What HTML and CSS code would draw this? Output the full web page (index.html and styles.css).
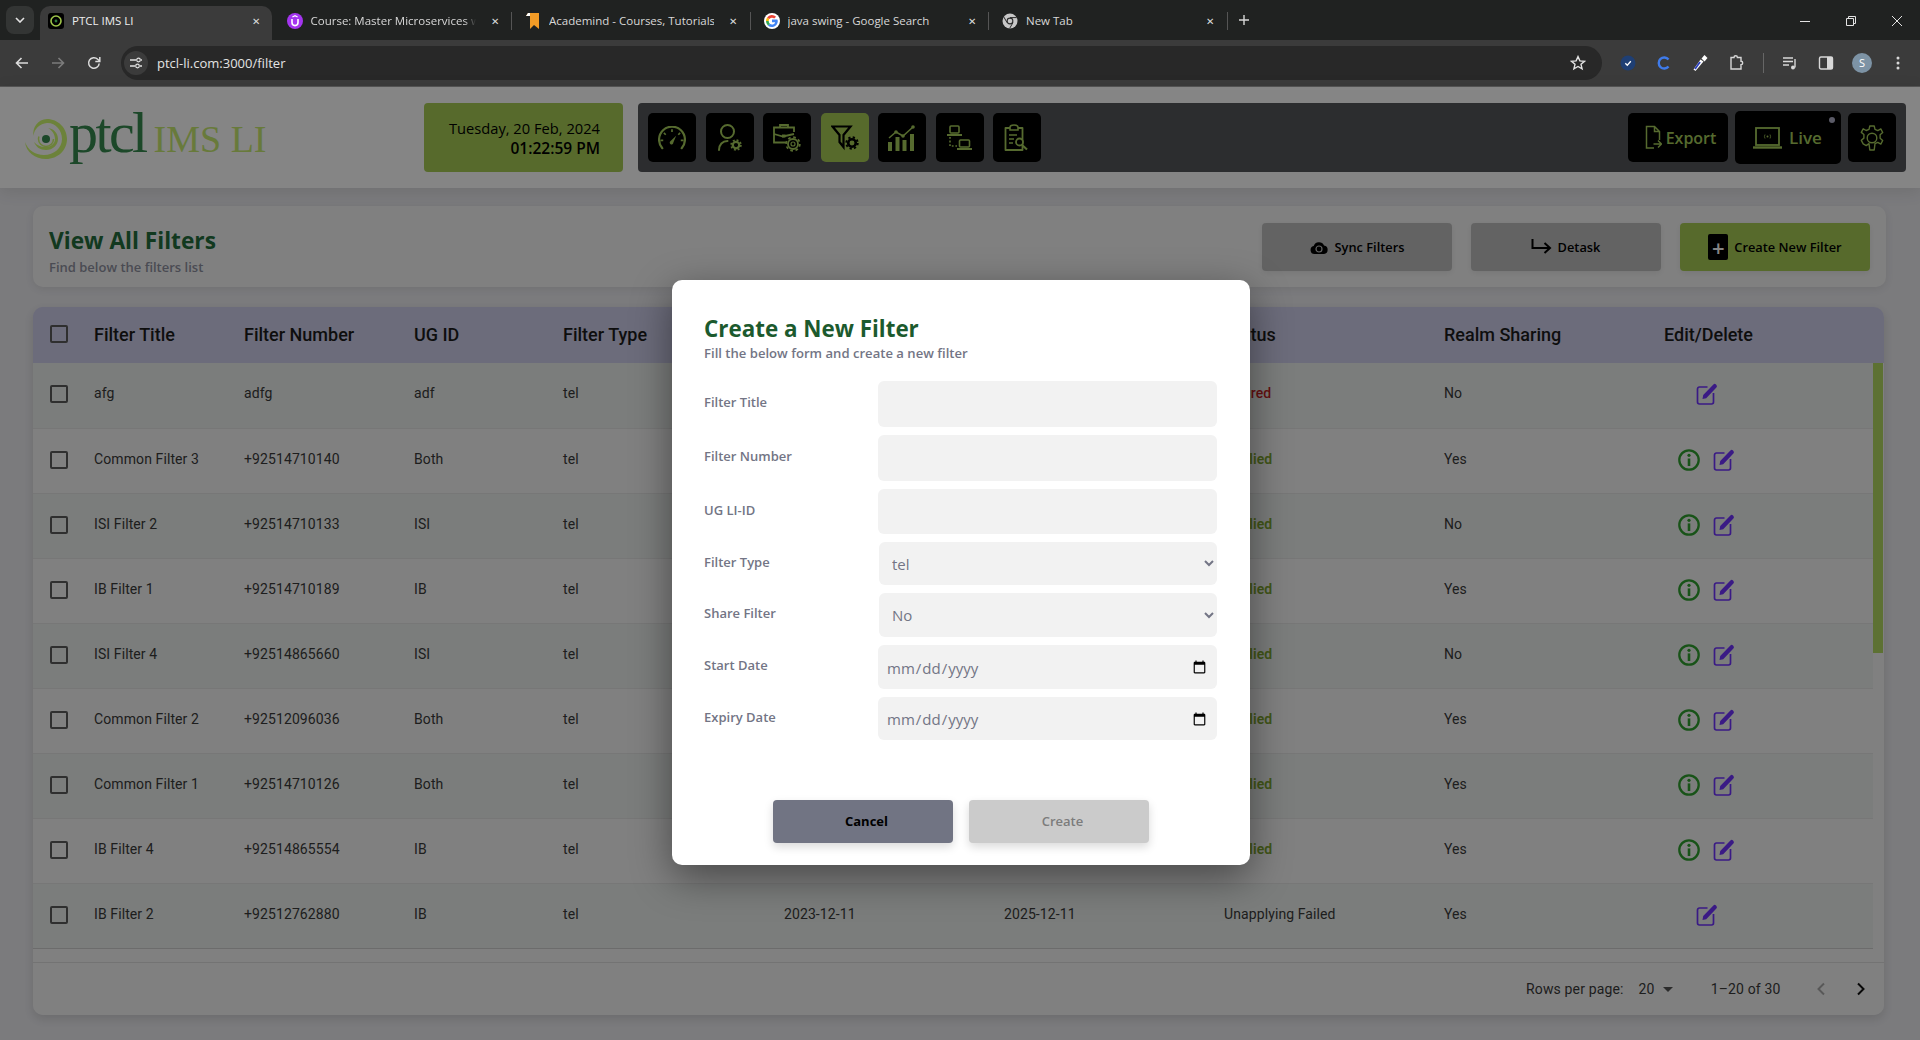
FILE: index.html
```html
<!DOCTYPE html>
<html lang="en">
<head>
    <meta charset="UTF-8">
    <title>PTCL IMS LI</title>
    <link rel="stylesheet" href="styles.css">
</head>
<body>

<svg class="defs" width="0" height="0">
    <symbol id="gear" viewBox="0 0 24 24">
        <circle cx="12" cy="12" r="6.5" fill="none" stroke="currentColor" stroke-width="4.5"/>
        <circle cx="12" cy="12" r="9.8" fill="none" stroke="currentColor" stroke-width="3.4" stroke-dasharray="3.85 3.85"/>
    </symbol>
    <symbol id="edit" viewBox="0 0 22 22">
        <path d="M11.500 4H3.400A1.900 1.900 0 0 0 1.500 5.900v13.200A1.900 1.900 0 0 0 3.400 21h12.200a1.900 1.900 0 0 0 1.900-1.900V10" fill="none" stroke="currentColor" stroke-width="1.700"/>
        <path d="M6.500 16l.7-4L17.400 1.500a1.800 1.800 0 0 1 2.600 0l.4.4a1.800 1.800 0 0 1 0 2.500L10.200 15.200z" fill="currentColor"/>
    </symbol>
    <symbol id="info" viewBox="0 0 22 22">
        <circle cx="11" cy="11" r="9.700" fill="none" stroke="currentColor" stroke-width="2.300"/>
        <circle cx="11" cy="6.300" r="1.600" fill="currentColor"/>
        <path d="M11 9.400v7.600" stroke="currentColor" stroke-width="2.600"/>
    </symbol>
</svg>

<!-- browser chrome -->
<div class="tabstrip">
    <div class="tab-search"><svg width="10" height="6" viewBox="0 0 10 6"><path d="M1 1l4 4 4-4" fill="none" stroke="#e3e3e3" stroke-width="1.600"/></svg></div>
    <div class="tab tab-active">
        <svg class="fav" viewBox="0 0 16 16"><rect width="16" height="16" rx="3" fill="#000"/><circle cx="8" cy="8" r="5" fill="none" stroke="#9fc54a" stroke-width="1.600"/><circle cx="8" cy="8" r="1.400" fill="#2e7d3a"/></svg>
        <span class="tab-title">PTCL IMS LI</span>
        <span class="tab-close">&#10005;</span>
    </div>
    <div class="tab">
        <svg class="fav" viewBox="0 0 16 16"><circle cx="8" cy="8" r="8" fill="#a435f0"/><path d="M5 6v3.600a3 3 0 0 0 6 0V6" fill="none" stroke="#fff" stroke-width="1.600"/><path d="M5.400 4L8 2.600 10.600 4" fill="none" stroke="#fff" stroke-width="1.200"/></svg>
        <span class="tab-title tab-title-fade">Course: Master Microservices wi</span>
        <span class="tab-close">&#10005;</span><i class="tab-sep"></i>
    </div>
    <div class="tab">
        <svg class="fav" viewBox="0 0 16 16"><path d="M3 0h11v16l-5-4-4 4V3H1z" fill="#f39c26"/><path d="M1 3l2-3h2v3z" fill="#fff"/></svg>
        <span class="tab-title">Academind - Courses, Tutorials</span>
        <span class="tab-close">&#10005;</span><i class="tab-sep"></i>
    </div>
    <div class="tab">
        <svg class="fav" viewBox="0 0 16 16"><circle cx="8" cy="8" r="8" fill="#fff"/><path d="M13.400 6.600H8v2.700h3.200a3.300 3.300 0 0 1-5.300 1.500l-2 1.700a6 6 0 0 0 9.900-4.500z" fill="#4285f4"/><path d="M3.900 12.500l2-1.700A3.300 3.300 0 0 1 4.700 8H2a6 6 0 0 0 1.900 4.500z" fill="#34a853"/><path d="M2 8h2.700a3.300 3.300 0 0 1 .6-2L3.100 4.400A6 6 0 0 0 2 8z" fill="#fbbc05"/><path d="M5.300 6A3.300 3.300 0 0 1 10.200 5.500l1.900-1.800A6 6 0 0 0 3.100 4.400z" fill="#ea4335"/></svg>
        <span class="tab-title">java swing - Google Search</span>
        <span class="tab-close">&#10005;</span><i class="tab-sep"></i>
    </div>
    <div class="tab">
        <svg class="fav" viewBox="0 0 16 16"><circle cx="8" cy="8" r="7.500" fill="#c7c7c7"/><circle cx="8" cy="8" r="3.400" fill="#2a2b2b"/><circle cx="8" cy="8" r="2.300" fill="#c7c7c7"/><path d="M8 4.600h6.500M5.100 9.700L1.900 4.100M10.900 9.700l-3.200 5.600" stroke="#2a2b2b" stroke-width="1"/></svg>
        <span class="tab-title">New Tab</span>
        <span class="tab-close">&#10005;</span><i class="tab-sep"></i>
    </div>
    <svg class="tab-new" width="12" height="12" viewBox="0 0 12 12"><path d="M6 1v10M1 6h10" stroke="#d8d8d8" stroke-width="1.400"/></svg>
    <div class="win-buttons">
        <svg width="10" height="10" viewBox="0 0 10 10"><path d="M0 5.500h10" stroke="#e3e3e3"/></svg>
        <svg width="10" height="10" viewBox="0 0 10 10"><path d="M.5 2.500h7v7h-7zM2.500 2.500V.5h7v7h-2" fill="none" stroke="#e3e3e3"/></svg>
        <svg width="10" height="10" viewBox="0 0 10 10"><path d="M0 0l10 10M10 0L0 10" stroke="#e3e3e3"/></svg>
    </div>
</div>

<div class="toolbar">
    <svg class="tb-icon" viewBox="0 0 16 16"><path d="M14 8H3M7.500 3L2.500 8l5 5" fill="none" stroke="#dcdcdc" stroke-width="1.600"/></svg>
    <svg class="tb-icon" viewBox="0 0 16 16"><path d="M2 8h11M8.500 3l5 5-5 5" fill="none" stroke="#7c7c7c" stroke-width="1.600"/></svg>
    <svg class="tb-icon" viewBox="0 0 16 16"><path d="M13.200 8.500a5.300 5.300 0 1 1-1.500-4.200L13.500 6" fill="none" stroke="#dcdcdc" stroke-width="1.500"/><path d="M13.800 2v4.500H9.300" fill="none" stroke="#dcdcdc" stroke-width="1.500"/></svg>
    <div class="omnibox">
        <span class="site-info"><svg width="14" height="14" viewBox="0 0 14 14"><path d="M1 4h6M11 10h2M1 10h5M12 4h1" stroke="#e3e3e3" stroke-width="1.300"/><circle cx="9.500" cy="4" r="1.800" fill="none" stroke="#e3e3e3" stroke-width="1.200"/><circle cx="8.500" cy="10" r="1.800" fill="none" stroke="#e3e3e3" stroke-width="1.200"/></svg></span>
        <span class="url">ptcl-li.com:3000/filter</span>
        <svg class="star" width="16" height="16" viewBox="0 0 16 16"><path d="M8 1.600l1.900 4.300 4.600.4-3.500 3 1.100 4.600L8 11.500l-4.100 2.400L5 9.300l-3.500-3 4.600-.4z" fill="none" stroke="#e3e3e3" stroke-width="1.400"/></svg>
    </div>
    <div class="ext-icons">
        <svg viewBox="0 0 16 16"><circle cx="8" cy="8" r="7.500" fill="#1f3f74"/><path d="M5.300 8.200l2 2 3.500-4" fill="none" stroke="#fff" stroke-width="1.300"/></svg>
        <svg viewBox="0 0 16 16"><path d="M12.500 4.500A5.500 5.500 0 1 0 12.500 11.500" fill="none" stroke="#3f7bea" stroke-width="2.400"/></svg>
        <svg viewBox="0 0 16 16"><path d="M3.500 16L1.500 14.500 8.500 4.500l3 2z" fill="#fff"/><path d="M3 14l5-7" stroke="#2b3fbd" stroke-width="1.800"/><path d="M9.500 3.500L12.500 0l3 3-3 3.500z" fill="#fff"/></svg>
        <svg viewBox="0 0 16 16"><path d="M6 2.500a1.700 1.700 0 0 1 3.400 0h3.600v3.800a1.700 1.700 0 0 1 0 3.400V14H3V9.700V2.500z" fill="none" stroke="#d8d8d8" stroke-width="1.400"/></svg>
        <i class="ext-sep"></i>
        <svg viewBox="0 0 16 16"><path d="M1 3h10M1 6.500h10M1 10h6" stroke="#d8d8d8" stroke-width="1.400"/><path d="M13 4v8.500" stroke="#d8d8d8" stroke-width="1.400"/><circle cx="11" cy="12.500" r="2" fill="#d8d8d8"/></svg>
        <svg viewBox="0 0 16 16"><rect x="1.500" y="2" width="13" height="12" rx="1.500" fill="none" stroke="#d8d8d8" stroke-width="1.400"/><rect x="9" y="2" width="5.500" height="12" fill="#d8d8d8"/></svg>
        <span class="avatar">S</span>
        <svg viewBox="0 0 16 16"><circle cx="8" cy="3" r="1.500" fill="#d8d8d8"/><circle cx="8" cy="8" r="1.500" fill="#d8d8d8"/><circle cx="8" cy="13" r="1.500" fill="#d8d8d8"/></svg>
    </div>
</div>

<div class="page">
    <header class="app-header">
        <div class="logo">
            <svg class="logo-mark" width="42" height="40" viewBox="0 0 42 40">
                <path d="M22 0C33 0 42 9 42 20S33 40 21 40C10 40 1 33 0 23c3 8 10 13 19 13 10 0 18-7 18-16S30 3.500 22 4C15 4.500 9 10 8.500 17 7 9 13 0 22 0z" fill="#d0fa70"/>
                <path d="M23 9c6 .5 10 5.500 10 11 0 6-5 11-12 11-6 0-10-3-12-8 3 3.500 7 5 11 5 6 0 10-3.500 10-8S27 11 23 9z" fill="#d0fa70"/>
                <circle cx="21" cy="20" r="7.500" fill="none" stroke="#d0fa70" stroke-width="1.500" stroke-dasharray="26 22"/>
                <circle cx="21" cy="20" r="4" fill="#368a50"/>
            </svg>
            <span class="logo-ptcl">ptcl</span>
            <span class="logo-ims">IMS LI</span>
        </div>
        <div class="clock">
            <div>Tuesday, 20 Feb, 2024</div>
            <div class="clock-time">01:22:59 PM</div>
        </div>
        <nav class="main-nav">
            <a class="nav-btn"><svg width="28" height="24" viewBox="0 0 30 26"><path d="M4.500 24A14 14 0 1 1 25.500 24" fill="none" stroke="currentColor" stroke-width="2.400" stroke-linecap="round"/><path d="M15 3.500v3M6.200 7.500l2 2M23.800 7.500l-2 2M2.500 15.500h3M24.500 15.500h3" stroke="currentColor" stroke-width="1.800"/><path d="M19.500 10.500L16.500 18a2 2 0 1 1-3-1.800z" fill="currentColor"/></svg></a>
            <a class="nav-btn"><svg width="24" height="28" viewBox="0 0 24 28"><circle cx="9.500" cy="7.500" r="6.500" fill="none" stroke="currentColor" stroke-width="2"/><path d="M1 26c0-5.500 3.500-9 8.500-9" fill="none" stroke="currentColor" stroke-width="2" stroke-linecap="round"/><use href="#gear" x="12" y="15" width="12" height="12"/></svg></a>
            <a class="nav-btn"><svg width="28" height="28" viewBox="0 0 28 28"><path d="M21 8V3.500H1v15h12M1 10l9 2.500 11-2.500M7 3.500V1h8v2.500" fill="none" stroke="currentColor" stroke-width="1.800"/><rect x="9" y="10.500" width="3.500" height="3" fill="currentColor"/><circle cx="20" cy="20" r="5" fill="none" stroke="currentColor" stroke-width="1.800"/><circle cx="20" cy="20" r="2" fill="none" stroke="currentColor" stroke-width="1.200"/><circle cx="20" cy="20" r="6.800" fill="none" stroke="currentColor" stroke-width="1.800" stroke-dasharray="2.700 2.640"/></svg></a>
            <a class="nav-btn nav-active"><svg width="28" height="26" viewBox="0 0 28 26"><path d="M1.500 1.500h18L12.500 10v12L8.500 17v-7z" fill="none" stroke="currentColor" stroke-width="2.200"/><use href="#gear" x="14" y="11" width="14" height="14"/></svg></a>
            <a class="nav-btn"><svg width="28" height="26" viewBox="0 0 28 26"><path d="M1 13l7-6 7 4 10-9" fill="none" stroke="currentColor" stroke-width="1.500"/><circle cx="8" cy="7" r="1.800" fill="currentColor"/><circle cx="15" cy="11" r="1.800" fill="currentColor"/><circle cx="25" cy="2" r="1.800" fill="currentColor"/><path d="M0 17h4v9H0zM7.500 12h4v14h-4zM14.500 15h4v11h-4zM22 9h4v17h-4z" fill="currentColor"/></svg></a>
            <a class="nav-btn"><svg width="26" height="26" viewBox="0 0 26 26"><rect x="3" y="1" width="9" height="7" rx="1" fill="none" stroke="currentColor" stroke-width="1.600"/><path d="M0 10h15" stroke="currentColor" stroke-width="2"/><rect x="12.500" y="15" width="10" height="7" rx="1" fill="none" stroke="currentColor" stroke-width="1.600"/><path d="M10 24h15" stroke="currentColor" stroke-width="2"/><path d="M3 12v9h7" fill="none" stroke="currentColor" stroke-width="1.600" stroke-dasharray="1.800 1.800"/></svg></a>
            <a class="nav-btn"><svg width="26" height="28" viewBox="0 0 26 28"><path d="M6 4H1.500v22h17V4H14" fill="none" stroke="currentColor" stroke-width="1.800" stroke-linejoin="round"/><path d="M6 6V3.500C6 2 7.500 1 10 1s4 1 4 2.500V6z" fill="none" stroke="currentColor" stroke-width="1.600"/><path d="M5 11h8M5 15h5M5 19h4" stroke="currentColor" stroke-width="1.500"/><circle cx="15.500" cy="18" r="3.500" fill="#000" stroke="currentColor" stroke-width="1.800"/><path d="M18 21l5 4.500" stroke="currentColor" stroke-width="2.200"/></svg></a>
            <div class="nav-right">
                <a class="nav-btn nav-export"><svg width="17" height="25" viewBox="0 0 17 25"><path d="M9 23H1.500V1.500h8l5 5V15M9.500 1.500v5h5" fill="none" stroke="currentColor" stroke-width="1.500"/><path d="M8.500 19h8M13 15.500l3.500 3.500-3.500 3.500" fill="none" stroke="currentColor" stroke-width="1.500"/></svg>Export</a>
                <a class="nav-btn nav-live"><svg width="29" height="22" viewBox="0 0 29 22"><rect x="3" y="1" width="23" height="17" fill="none" stroke="currentColor" stroke-width="1.800"/><path d="M0 20.500h29" stroke="currentColor" stroke-width="2.400"/><path d="M12 7.500a4 4 0 0 0 0 4M17 7.500a4 4 0 0 1 0 4" fill="none" stroke="currentColor" stroke-width=".8"/><circle cx="14.500" cy="9.500" r="1" fill="currentColor"/></svg>Live<i class="live-dot"></i></a>
                <a class="nav-btn nav-settings"><svg width="24" height="30" viewBox="0 0 24 30"><circle cx="12" cy="15" r="4.800" fill="none" stroke="currentColor" stroke-width="1.400"/><path d="M9.800 3h4.400l.8 3.400 2.800 1.200 3-1.700 1.900 3.600-2.600 2.200v3.600l2.600 2.200-1.900 3.600-3-1.700L15 20.600 14.200 27H9.800L9 20.600l-2.800 2-3-1.700-1.900-3.600 2.600-2.200v-3.600L1.300 9.400l1.900-3.600 3 1.700L9 6.400z" fill="none" stroke="currentColor" stroke-width="1.400" stroke-linejoin="round"/></svg></a>
            </div>
        </nav>
    </header>

    <main class="content">
        <section class="title-card">
            <div class="title-text">
                <h1>View All Filters</h1>
                <p>Find below the filters list</p>
            </div>
            <div class="title-actions">
                <button class="action-btn"><svg width="18" height="16" viewBox="0 0 18 16"><path d="M4.500 15a4 4 0 0 1-.8-7.900A5.500 5.500 0 0 1 14 6.500 4.300 4.300 0 0 1 14 15z" fill="#000"/><circle cx="9" cy="10" r="3" fill="none" stroke="#bfbfbf" stroke-width="1.200"/></svg>Sync Filters</button>
                <button class="action-btn action-detask"><svg width="21" height="16" viewBox="0 0 21 16"><path d="M1.500 0v9h17M13.500 4l5.500 5-5.500 5" fill="none" stroke="#000" stroke-width="2"/></svg>Detask</button>
                <button class="action-btn action-create"><span class="plus-box">+</span>Create New Filter</button>
            </div>
        </section>

        <section class="table-card">
            <table class="filters">
                <colgroup>
                    <col class="c-check"><col class="c-title"><col class="c-number"><col class="c-ug"><col class="c-type">
                    <col class="c-start"><col class="c-expiry"><col class="c-status"><col class="c-realm"><col class="c-edit">
                </colgroup>
                <thead>
                    <tr>
                        <th><span class="check"></span></th>
                        <th>Filter Title</th>
                        <th>Filter Number</th>
                        <th>UG ID</th>
                        <th>Filter Type</th>
                        <th>Start Date</th>
                        <th>Expiry Date</th>
                        <th>Status</th>
                        <th>Realm Sharing</th>
                        <th>Edit/Delete</th>
                    </tr>
                </thead>
                <tbody>
                    <tr>
                        <td><span class="check"></span></td><td>afg</td><td>adfg</td><td>adf</td><td>tel</td>
                        <td>2024-02-20</td><td>2024-02-20</td><td class="st-red">Expired</td><td>No</td>
                        <td><div class="row-icons row-icons-single"><svg class="ic-edit"><use href="#edit"/></svg></div></td>
                    </tr>
                    <tr>
                        <td><span class="check"></span></td><td>Common Filter 3</td><td>+92514710140</td><td>Both</td><td>tel</td>
                        <td>2023-12-11</td><td>2025-12-11</td><td class="st-green">Applied</td><td>Yes</td>
                        <td><div class="row-icons"><svg class="ic-info"><use href="#info"/></svg><svg class="ic-edit"><use href="#edit"/></svg></div></td>
                    </tr>
                    <tr>
                        <td><span class="check"></span></td><td>ISI Filter 2</td><td>+92514710133</td><td>ISI</td><td>tel</td>
                        <td>2023-12-11</td><td>2025-12-11</td><td class="st-green">Applied</td><td>No</td>
                        <td><div class="row-icons"><svg class="ic-info"><use href="#info"/></svg><svg class="ic-edit"><use href="#edit"/></svg></div></td>
                    </tr>
                    <tr>
                        <td><span class="check"></span></td><td>IB Filter 1</td><td>+92514710189</td><td>IB</td><td>tel</td>
                        <td>2023-12-11</td><td>2025-12-11</td><td class="st-green">Applied</td><td>Yes</td>
                        <td><div class="row-icons"><svg class="ic-info"><use href="#info"/></svg><svg class="ic-edit"><use href="#edit"/></svg></div></td>
                    </tr>
                    <tr>
                        <td><span class="check"></span></td><td>ISI Filter 4</td><td>+92514865660</td><td>ISI</td><td>tel</td>
                        <td>2023-12-11</td><td>2025-12-11</td><td class="st-green">Applied</td><td>No</td>
                        <td><div class="row-icons"><svg class="ic-info"><use href="#info"/></svg><svg class="ic-edit"><use href="#edit"/></svg></div></td>
                    </tr>
                    <tr>
                        <td><span class="check"></span></td><td>Common Filter 2</td><td>+92512096036</td><td>Both</td><td>tel</td>
                        <td>2023-12-11</td><td>2025-12-11</td><td class="st-green">Applied</td><td>Yes</td>
                        <td><div class="row-icons"><svg class="ic-info"><use href="#info"/></svg><svg class="ic-edit"><use href="#edit"/></svg></div></td>
                    </tr>
                    <tr>
                        <td><span class="check"></span></td><td>Common Filter 1</td><td>+92514710126</td><td>Both</td><td>tel</td>
                        <td>2023-12-11</td><td>2025-12-11</td><td class="st-green">Applied</td><td>Yes</td>
                        <td><div class="row-icons"><svg class="ic-info"><use href="#info"/></svg><svg class="ic-edit"><use href="#edit"/></svg></div></td>
                    </tr>
                    <tr>
                        <td><span class="check"></span></td><td>IB Filter 4</td><td>+92514865554</td><td>IB</td><td>tel</td>
                        <td>2023-12-11</td><td>2025-12-11</td><td class="st-green">Applied</td><td>Yes</td>
                        <td><div class="row-icons"><svg class="ic-info"><use href="#info"/></svg><svg class="ic-edit"><use href="#edit"/></svg></div></td>
                    </tr>
                    <tr>
                        <td><span class="check"></span></td><td>IB Filter 2</td><td>+92512762880</td><td>IB</td><td>tel</td>
                        <td>2023-12-11</td><td>2025-12-11</td><td class="st-fail">Unapplying Failed</td><td>Yes</td>
                        <td><div class="row-icons row-icons-single"><svg class="ic-edit"><use href="#edit"/></svg></div></td>
                    </tr>
                </tbody>
            </table>
            <div class="scroll-thumb"></div>
            <footer class="pager">
                <span>Rows per page:</span>
                <span class="pager-size">20<i class="pager-caret"></i></span>
                <span class="pager-range">1–20 of 30</span>
                <svg class="pager-arrow" width="10" height="14" viewBox="0 0 10 14"><path d="M8 1.500L2.500 7 8 12.500" fill="none" stroke="#aaa" stroke-width="2"/></svg>
                <svg class="pager-arrow" width="10" height="14" viewBox="0 0 10 14"><path d="M2 1.500L7.500 7 2 12.500" fill="none" stroke="#111" stroke-width="2"/></svg>
            </footer>
        </section>
    </main>

    <!-- dim layer and create dialog -->
    <div class="backdrop"></div>
    <div class="modal">
        <h2>Create a New Filter</h2>
        <p class="modal-sub">Fill the below form and create a new filter</p>
        <form class="modal-form">
            <label>Filter Title</label>
            <input class="field" type="text">
            <label>Filter Number</label>
            <input class="field" type="text">
            <label>UG LI-ID</label>
            <input class="field" type="text">
            <label>Filter Type</label>
            <select class="field field-select"><option>tel</option></select>
            <label>Share Filter</label>
            <select class="field field-select"><option>No</option></select>
            <label>Start Date</label>
            <input class="field field-date" type="date">
            <label>Expiry Date</label>
            <input class="field field-date" type="date">
        </form>
        <div class="modal-actions">
            <button class="modal-btn modal-cancel">Cancel</button>
            <button class="modal-btn modal-create">Create</button>
        </div>
    </div>
</div>

</body>
</html>
```

FILE: styles.css
```css
* {
    box-sizing: border-box;
}

body {
    margin: 0;
    width: 1920px;
    height: 1040px;
    overflow: hidden;
    font-family: "Open Sans", sans-serif;
    background-color: #fff;
}

.defs {
    position: absolute;
}

/* browser chrome */
.tabstrip {
    height: 40px;
    display: flex;
    align-items: flex-end;
    background-color: #202221;
    font-size: 11.5px;
    color: #d8d8d8;
}

.tab-search {
    width: 28px;
    height: 28px;
    margin: 0 6px 6px 6px;
    display: flex;
    align-items: center;
    justify-content: center;
    background-color: #333534;
    border-radius: 8px;
}

.tab {
    width: 238.5px;
    height: 34px;
    padding: 0 0 5px 8px;
    display: flex;
    align-items: center;
    position: relative;
}

.tab-active {
    width: 232px;
    margin-right: 6.5px;
    background-color: #3b3b3b;
    border-radius: 10px 10px 0 0;
    color: #eee;
}

.fav {
    width: 16px;
    height: 16px;
    flex: none;
}

.tab-title {
    width: 165px;
    margin-left: 8px;
    white-space: nowrap;
    overflow: hidden;
}

.tab-title-fade {
    -webkit-mask-image: linear-gradient(to right, #000 93%, transparent);
    mask-image: linear-gradient(to right, #000 93%, transparent);
}

.tab-close {
    width: 16px;
    margin-left: 11px;
    text-align: center;
    font-size: 10px;
    color: #dcdcdc;
}

.tab-sep {
    position: absolute;
    right: 5px;
    top: 6px;
    width: 1px;
    height: 18px;
    background-color: #555;
}

.tab-new {
    margin: 0 0 14px 5px;
}

.win-buttons {
    margin-left: auto;
    margin-bottom: 14px;
    padding-right: 18px;
    display: flex;
    gap: 36px;
}

.toolbar {
    height: 47px;
    padding: 6px 0 7px 14px;
    display: flex;
    align-items: center;
    background-color: #3b3b3b;
    border-bottom: 1px solid #555;
}

.tb-icon {
    width: 16px;
    height: 16px;
    margin-right: 20px;
}

.omnibox {
    width: 1481px;
    height: 34px;
    margin-left: -1px;
    padding: 0 16px 0 3px;
    display: flex;
    align-items: center;
    background-color: #282828;
    border-radius: 17px;
}

.site-info {
    width: 24px;
    height: 24px;
    display: flex;
    align-items: center;
    justify-content: center;
    background-color: #3b3b3b;
    border-radius: 50%;
}

.url {
    margin-left: 9px;
    font-size: 13px;
    color: #e3e3e3;
}

.star {
    margin-left: auto;
}

.ext-icons {
    margin-left: 18px;
    display: flex;
    align-items: center;
    gap: 20px;
}

.ext-icons svg {
    width: 16px;
    height: 16px;
}

.ext-sep {
    width: 1px;
    height: 20px;
    margin: 0 -1.5px;
    background-color: #666;
}

.avatar {
    width: 20px;
    height: 20px;
    margin: 0 -2px;
    border-radius: 50%;
    background-color: #7d93a5;
    color: #fff;
    font-size: 11px;
    line-height: 20px;
    text-align: center;
}

/* page */
.page {
    position: relative;
    height: 953px;
    background-color: #ebebef;
}

.app-header {
    height: 101px;
    padding: 16px 14px 0 25px;
    display: flex;
    background-color: #fff;
    box-shadow: 0 3px 16px rgba(0, 0, 0, 0.1);
    position: relative;
}

.logo {
    flex: 0 0 399px;
    height: 69px;
    display: flex;
    align-items: baseline;
    white-space: nowrap;
    font-family: "Liberation Serif", serif;
}

.logo-mark {
    align-self: flex-start;
    margin-top: 16px;
    flex: none;
}

.logo-ptcl {
    margin-left: 2px;
    font-size: 58px;
    line-height: 59px;
    letter-spacing: -2.6px;
    color: #368a50;
}

.logo-ims {
    margin-left: 8px;
    font-size: 38px;
    color: #c8ea72;
}

.clock {
    flex: 0 0 199px;
    height: 69px;
    padding: 15px 23px 0 0;
    background-color: #a7cc55;
    border-radius: 4px;
    text-align: right;
    font-size: 14.7px;
    line-height: 20px;
    color: #000;
}

.clock-time {
    font-size: 15.5px;
    font-weight: 600;
}

.main-nav {
    flex: 1;
    height: 69px;
    margin-left: 15px;
    padding: 0 10px;
    display: flex;
    align-items: center;
    gap: 9.5px;
    background-color: #55575b;
    border-radius: 4px;
}

.nav-btn {
    width: 48px;
    height: 49px;
    display: flex;
    align-items: center;
    justify-content: center;
    background-color: #000;
    border-radius: 5px;
    color: #a5cc5a;
    font-weight: 600;
    font-size: 16px;
    flex: none;
}

.nav-active {
    background-color: #a7cc55;
    color: #000;
}

.nav-right {
    margin-left: auto;
    display: flex;
    align-items: center;
    gap: 7px;
}

.nav-export {
    width: 100px;
    padding-left: 5px;
    gap: 4px;
}

.nav-live {
    width: 106px;
    height: 53px;
    padding-right: 1px;
    gap: 7px;
    font-size: 17px;
    position: relative;
}

.live-dot {
    position: absolute;
    top: 6px;
    right: 6px;
    width: 6px;
    height: 6px;
    border-radius: 50%;
    background-color: #aeaec6;
}

.content {
    padding: 18px 0 0 33px;
}

.title-card {
    width: 1853px;
    height: 81px;
    padding: 0 16px;
    display: flex;
    align-items: center;
    background-color: #f6f6f6;
    border-radius: 10px;
    box-shadow: 0 2px 8px rgba(0, 0, 0, 0.08);
}

.title-text {
    padding-top: 10px;
}

.title-text h1 {
    margin: 0;
    font-size: 22.7px;
    line-height: 28px;
    font-weight: 700;
    color: #236e3c;
}

.title-text p {
    margin: 4px 0 0;
    font-size: 13px;
    line-height: 17px;
    font-weight: 600;
    color: #8f919f;
}

.title-actions {
    margin-left: auto;
    display: flex;
    gap: 19px;
}

.action-btn {
    width: 190px;
    height: 48px;
    padding-left: 6px;
    display: flex;
    align-items: center;
    justify-content: center;
    gap: 7px;
    border: none;
    border-radius: 4px;
    background-color: #bfbfbf;
    color: #000;
    font-family: "Open Sans", sans-serif;
    font-size: 12.8px;
    font-weight: 600;
    box-shadow: 0 2px 6px rgba(0, 0, 0, 0.08);
}

.action-detask {
    gap: 6px;
    padding-left: 5px;
}

.action-create {
    background-color: #a7cc55;
}

.plus-box {
    width: 20px;
    height: 26px;
    margin-right: -1px;
    display: flex;
    align-items: center;
    justify-content: center;
    background-color: #000;
    border-radius: 2px;
    color: #fff;
    font-size: 22px;
    font-weight: 600;
    line-height: 1;
}

.table-card {
    width: 1851px;
    height: 708px;
    margin-top: 20px;
    position: relative;
    background: linear-gradient(#d0d0eb 56px, #f6f6f6 56px);
    border-radius: 10px;
    box-shadow: 0 4px 10px rgba(0, 0, 0, 0.12);
    font-family: Roboto, sans-serif;
    overflow: hidden;
}

.filters {
    width: 1840px;
    table-layout: fixed;
    border-collapse: collapse;
    color: #3a3a3a;
}

.c-check { width: 51px; }
.c-title { width: 150px; }
.c-number { width: 170px; }
.c-ug { width: 149px; }
.c-type { width: 221px; }
.c-start { width: 220px; }
.c-expiry { width: 220px; }
.c-status { width: 220px; }
.c-realm { width: 220px; }
.c-edit { width: 219px; }

.filters th {
    height: 56px;
    padding: 0 10px 2px;
    background-color: #d0d0eb;
    text-align: left;
    font-size: 18px;
    font-weight: 500;
    color: #1c1c1c;
}

.filters td {
    height: 65px;
    padding: 0 10px 4px;
    font-size: 14px;
    letter-spacing: 0.1px;
    border-bottom: 1px solid #e4e4e4;
}

.filters tbody tr:nth-child(odd) td {
    background-color: #ebf0ed;
}

.filters tbody tr:last-child td {
    border-bottom-color: #cfcfcf;
}

.filters th:first-child,
.filters td:first-child {
    padding: 0 0 2px 17px;
}

.check {
    display: block;
    width: 18px;
    height: 18px;
    border: 2px solid #5a5a5a;
    border-radius: 2px;
}

.st-red {
    color: #c41f1f;
    font-weight: 500;
}

.st-green {
    color: #7da52f;
    font-weight: 600;
}

.row-icons {
    padding: 2px 0 0 14px;
    display: flex;
    align-items: center;
    gap: 13px;
}

.row-icons-single {
    padding-left: 32px;
}

.ic-edit {
    width: 22px;
    height: 22px;
    color: #7032ff;
}

.ic-info {
    width: 22px;
    height: 22px;
    color: #2fa02f;
}

.scroll-thumb {
    position: absolute;
    left: 1840px;
    top: 56px;
    width: 10px;
    height: 290px;
    background-color: #b3d862;
}

.pager {
    position: absolute;
    left: 0;
    right: 0;
    bottom: 0;
    height: 53px;
    padding-left: 1493px;
    display: flex;
    align-items: center;
    border-top: 1px solid #dcdcdc;
    font-size: 14px;
    letter-spacing: 0.15px;
    color: #3a3a3a;
}

.pager-size {
    margin-left: 15px;
    display: flex;
    align-items: center;
}

.pager-caret {
    margin-left: 8px;
    border: 5px solid transparent;
    border-top-color: #555;
    border-bottom: none;
}

.pager-range {
    margin-left: 38px;
    width: 105px;
}

.pager-arrow + .pager-arrow {
    margin-left: 30px;
}

.backdrop {
    position: absolute;
    inset: 0;
    background-color: rgba(0, 0, 0, 0.48);
}

.modal {
    position: absolute;
    left: 672px;
    top: 193px;
    width: 578px;
    height: 585px;
    padding: 34px 33px 0;
    background-color: #fff;
    border-radius: 10px;
    box-shadow: 0 12px 40px rgba(0, 0, 0, 0.45);
}

.modal h2 {
    margin: 0 0 0 -1px;
    font-size: 22.4px;
    line-height: 30px;
    font-weight: 700;
    color: #1c5a2e;
}

.modal-sub {
    margin: 1px 0 0 -1px;
    font-size: 13.1px;
    line-height: 16px;
    font-weight: 600;
    color: #737585;
}

.modal-form {
    margin-top: 20px;
    display: grid;
    grid-template-columns: 173px 339px;
    grid-template-rows: 46px 46px 45px 43px 44px 44px 43px;
    row-gap: 8px;
}

.modal-form label {
    align-self: center;
    margin-left: -1px;
    padding-bottom: 4px;
    font-size: 13px;
    font-weight: 600;
    color: #737585;
}

.field {
    width: 100%;
    height: 100%;
    border: none;
    border-radius: 6px;
    background-color: #f2f2f2;
    font-family: "Open Sans", sans-serif;
    font-size: 15px;
    color: #737585;
}

.field-select {
    width: 338px;
    margin-left: 1px;
    padding-left: 9px;
}

.field-date {
    padding: 1px 8px 0 8px;
}

.modal-actions {
    margin-top: 60px;
    display: flex;
    justify-content: center;
    gap: 16px;
}

.modal-btn {
    width: 180px;
    height: 43px;
    padding: 0 0 2px 7px;
    border: none;
    border-radius: 4px;
    font-family: "Open Sans", sans-serif;
    font-size: 13px;
    font-weight: 700;
    box-shadow: 0 4px 10px rgba(0, 0, 0, 0.15);
}

.modal-cancel {
    background-color: #717483;
    color: #000;
}

.modal-create {
    background-color: #cbcbcb;
    color: #7c7c7c;
    font-weight: 600;
}
```
